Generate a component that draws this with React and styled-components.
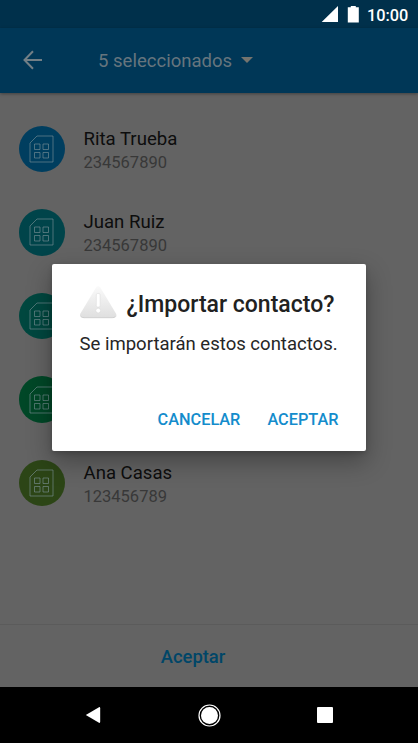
import styled, { createGlobalStyle } from 'styled-components'

const GlobalStyle = createGlobalStyle`
  * {
    box-sizing: border-box;
  }

  body {
    margin: 0;
    background: #636363;
    font-family: Roboto, 'Liberation Sans', sans-serif;
  }

  button {
    border: 0;
    padding: 0;
    background: none;
    font-family: inherit;
  }

  svg {
    display: block;
  }
`

const Screen = styled.div`
  position: relative;
  display: flex;
  flex-direction: column;
  width: 418px;
  height: 743px;
  overflow: hidden;
  background: #636363;
`

const StatusBar = styled.div`
  display: flex;
  flex: none;
  align-items: center;
  justify-content: flex-end;
  height: 28px;
  padding-right: 10px;
  background: #00304b;
  color: #fff;
`

const Clock = styled.span`
  width: 41px;
  margin-left: 8px;
  padding-top: 3px;
  font-size: 16.3px;
  font-weight: 500;
  line-height: 20px;
  white-space: nowrap;
`

const Toolbar = styled.header`
  display: flex;
  flex: none;
  align-items: center;
  height: 65px;
  padding: 0 0 1px 23px;
  background: #003757;
  box-shadow: 0 1px 3px rgba(0, 0, 0, 0.35);
`

const Selection = styled.button`
  display: flex;
  align-items: center;
  gap: 9px;
  margin-left: 55px;
  padding-top: 2px;
  color: #66757e;
  font-size: 18.55px;
  line-height: 24px;
`

const List = styled.ul`
  flex: 1;
  margin: 0;
  padding: 14px 0 0;
  list-style: none;
`

const Row = styled.li`
  display: flex;
  align-items: center;
  height: 83.6px;
  padding-left: 18.5px;
`

const Avatar = styled.div`
  display: flex;
  flex: none;
  align-items: center;
  justify-content: center;
  width: 46.5px;
  height: 46.5px;
  margin-right: 18.5px;
  border-radius: 50%;
  background: ${(props) => props.$color};
`

const Details = styled.div`
  padding-top: 3px;
`

const Name = styled.div`
  color: #0d0d0d;
  font-size: 18.6px;
  line-height: 24px;
`

const Phone = styled.div`
  color: #383838;
  font-size: 16.5px;
  line-height: 23px;
`

const Footer = styled.footer`
  display: flex;
  flex: none;
  justify-content: center;
  height: 63px;
  padding-right: 32px;
  border-top: 1px solid #5b5b5b;
`

const FooterButton = styled.button`
  color: #004668;
  font-size: 18.4px;
  font-weight: 500;
`

const NavBar = styled.nav`
  display: flex;
  flex: none;
  align-items: center;
  height: 56px;
  padding-left: 85px;
  background: #000;
`

const NavIcon = styled.svg`
  margin-right: ${(props) => props.$gap}px;
  fill: #fff;
`

const Overlay = styled.div`
  position: absolute;
  top: 264px;
  left: 52px;
`

const Dialog = styled.section`
  display: flex;
  flex-direction: column;
  width: 314px;
  height: 187px;
  padding: 20px 27.5px 19px;
  border-radius: 2px;
  background: #fff;
  box-shadow: 0 10px 24px 1px rgba(0, 0, 0, 0.3), 0 2px 5px rgba(0, 0, 0, 0.16);
`

const DialogTitle = styled.h2`
  display: flex;
  align-items: flex-start;
  gap: 9px;
  height: 38px;
  margin: 0;
  padding-top: 2px;
  color: #212121;
  font-size: 23px;
  font-weight: 500;
  line-height: 38px;
  white-space: nowrap;
`

const DialogText = styled.p`
  margin: 10px 0 0;
  color: #262626;
  font-size: 18.55px;
  line-height: 24px;
  white-space: nowrap;
`

const Actions = styled.div`
  display: flex;
  justify-content: flex-end;
  gap: 27px;
  margin-top: auto;
`

const Action = styled.button`
  color: #148ccc;
  font-size: 16.3px;
  font-weight: 500;
  line-height: 24px;
`

const contacts = [
  { name: 'Rita Trueba', phone: '234567890', color: '#003e5f' },
  { name: 'Juan Ruiz', phone: '234567890', color: '#00444a' },
  { name: '', phone: '', color: '#00473f' },
  { name: '', phone: '', color: '#004727' },
  { name: 'Ana Casas', phone: '123456789', color: '#2c4516' },
]

const SimIcon = () => (
  <svg width='25' height='28' viewBox='0 0 25 28' fill='none' stroke='#7f9499' strokeOpacity='0.6'>
    <path d='M8 1h16v26H1V8z' />
    <path d='M5.5 9h5.5v5.5H5.5zM14 9h5.5v5.5H14zM5.5 17.5h5.5V23H5.5zM14 17.5h5.5V23H14z' />
  </svg>
)

const WarningIcon = () => (
  <svg width='38' height='34' viewBox='.8 0 38 34'>
    <defs>
      <linearGradient id='warning' x1='0' y1='0' x2='0' y2='1'>
        <stop offset='0' stopColor='#fafafa' />
        <stop offset='1' stopColor='#dfdfdf' />
      </linearGradient>
    </defs>
    <path
      d='M16.7 1.8Q19 -1.1 21.3 1.8L36.6 27.2Q38.7 31.8 34 31.8H4Q-.7 31.8 1.4 27.2z'
      fill='url(#warning)'
    />
    <path d='M2 30.7Q3 31.7 5 31.7h28q2 0 3-1' fill='none' stroke='#c8c8c8' strokeWidth='.8' />
    <rect x='17.1' y='7.5' width='3.8' height='13.5' rx='1.3' fill='#fff' stroke='#dedede' strokeWidth='.6' />
    <circle cx='19' cy='24.6' r='2.4' fill='#fff' stroke='#d6d6d6' strokeWidth='.5' />
  </svg>
)

const App = () => {
  return (
    <Screen>
      <GlobalStyle />

      <StatusBar>
        <svg width='38' height='18' viewBox='0 0 38 18' fill='#fff'>
          <path d='M17 1v16H.7zM26.8 2.2h3V1h5v1.2h3V17.5h-11z' />
        </svg>
        <Clock>10:00</Clock>
      </StatusBar>

      <Toolbar>
        <svg width='20' height='20' viewBox='0 0 20 20' fill='none' stroke='#727f86' strokeWidth='2'>
          <path d='M19 10H2M10 1.3L1.5 10l8.5 8.7' />
        </svg>
        <Selection>
          5 seleccionados
          <svg width='12' height='8' viewBox='0 0 12 8' fill='#75746e'>
            <path d='M0 0h12L6 6z' />
          </svg>
        </Selection>
      </Toolbar>

      <List>
        {contacts.map((contact) => (
          <Row key={contact.color}>
            <Avatar $color={contact.color}>
              <SimIcon />
            </Avatar>
            <Details>
              <Name>{contact.name}</Name>
              <Phone>{contact.phone}</Phone>
            </Details>
          </Row>
        ))}
      </List>

      <Footer>
        <FooterButton>Aceptar</FooterButton>
      </Footer>

      <NavBar>
        <NavIcon $gap={96.5} width='16' height='18' viewBox='0 0 16 18'>
          <path d='M.8 9L14 1.2q1.2-.4 1.2 1v13.6q0 1.4-1.2 1z' />
        </NavIcon>
        <NavIcon $gap={96.5} width='23' height='23' viewBox='0 0 23 23'>
          <circle cx='11.5' cy='11.5' r='10.5' fill='none' stroke='#fff' strokeWidth='1.2' />
          <circle cx='11.5' cy='11.5' r='8.5' />
        </NavIcon>
        <NavIcon $gap={0} width='16' height='16' viewBox='0 0 16 16'>
          <rect width='16' height='16' rx='1' />
        </NavIcon>
      </NavBar>

      <Overlay>
        <Dialog>
          <DialogTitle>
            <WarningIcon />
            ¿Importar contacto?
          </DialogTitle>
          <DialogText>Se importarán estos contactos.</DialogText>
          <Actions>
            <Action>CANCELAR</Action>
            <Action>ACEPTAR</Action>
          </Actions>
        </Dialog>
      </Overlay>
    </Screen>
  )
}

export default App
